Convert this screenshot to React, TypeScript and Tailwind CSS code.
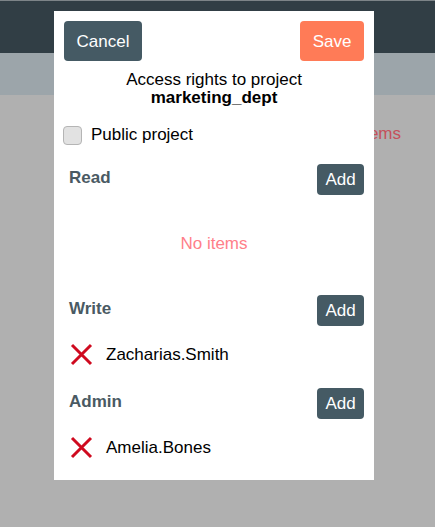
const sections = [
  { label: "Read", users: [] as string[] },
  { label: "Write", users: ["Zacharias.Smith"] },
  { label: "Admin", users: ["Amelia.Bones"] },
];

const RemoveIcon = () => (
  <svg width="23" height="23" viewBox="0 0 23 23" className="shrink-0">
    <path d="M2 2 L21 21 M21 2 L2 21" stroke="#cf0a1f" strokeWidth="3" fill="none" />
  </svg>
);

export default function App() {
  return (
    <div className="relative h-[527px] w-[435px] overflow-hidden bg-[#b0b0b0] font-['Liberation_Sans',Arial,sans-serif]">
      {/* page behind the overlay */}
      <div className="h-[53px] border-t border-[#7d8488] bg-[#313e45]" />
      <div className="h-[42px] bg-[#9ca5aa]" />
      <div className="flex justify-end pr-[34px] pt-[29px] text-[17px] leading-[20px] text-[#c4515c]">
        No items
      </div>

      {/* dialog */}
      <div className="absolute left-[54px] top-[11px] w-[320px] bg-white p-[10px] pb-[21px] text-black">
        <div className="flex justify-between">
          <button className="h-10 w-[78px] rounded-[4px] bg-[#455a64] pt-[2px] text-[17px] text-white">Cancel</button>
          <button className="h-10 w-[64px] rounded-[4px] bg-[#ff7b57] pt-[2px] text-[17px] text-white">Save</button>
        </div>
        <div className="mt-[10px] text-center text-[17px] leading-[18px]">
          <div>Access rights to project</div>
          <div className="font-bold">marketing_dept</div>
        </div>
        <label className="ml-[-1px] mt-[18px] flex h-[20px] items-center gap-[9px] text-[17px]">
          <span className="h-[19px] w-[19px] rounded-[4px] border border-[#b5b5b5] bg-[#e2e2e2]" />
          Public project
        </label>

        {sections.map((s, i) => (
          <div key={s.label} className={i === 0 ? "mt-[19px]" : i === 1 ? "" : "mt-[22px]"}>
            <div className="flex items-start justify-between">
              <span className="mt-[4px] pl-[5px] text-[17px] font-bold leading-[20px] text-[#4a5a63]">{s.label}</span>
              <button className="h-[31px] w-[47px] rounded-[4px] bg-[#455a64] pt-[1px] text-[17px] text-white">Add</button>
            </div>
            {s.users.length === 0 ? (
              <div className="h-[100px] pt-[39px] text-center text-[17px] leading-[20px] text-[#ff7f8a]">No items</div>
            ) : (
              s.users.map((u) => (
                <div key={u} className="mt-[16px] flex h-[24px] items-center gap-[13px] pl-[6px] text-[17px]">
                  <RemoveIcon />
                  <span className="pt-[1px]">{u}</span>
                </div>
              ))
            )}
          </div>
        ))}
      </div>
    </div>
  );
}
